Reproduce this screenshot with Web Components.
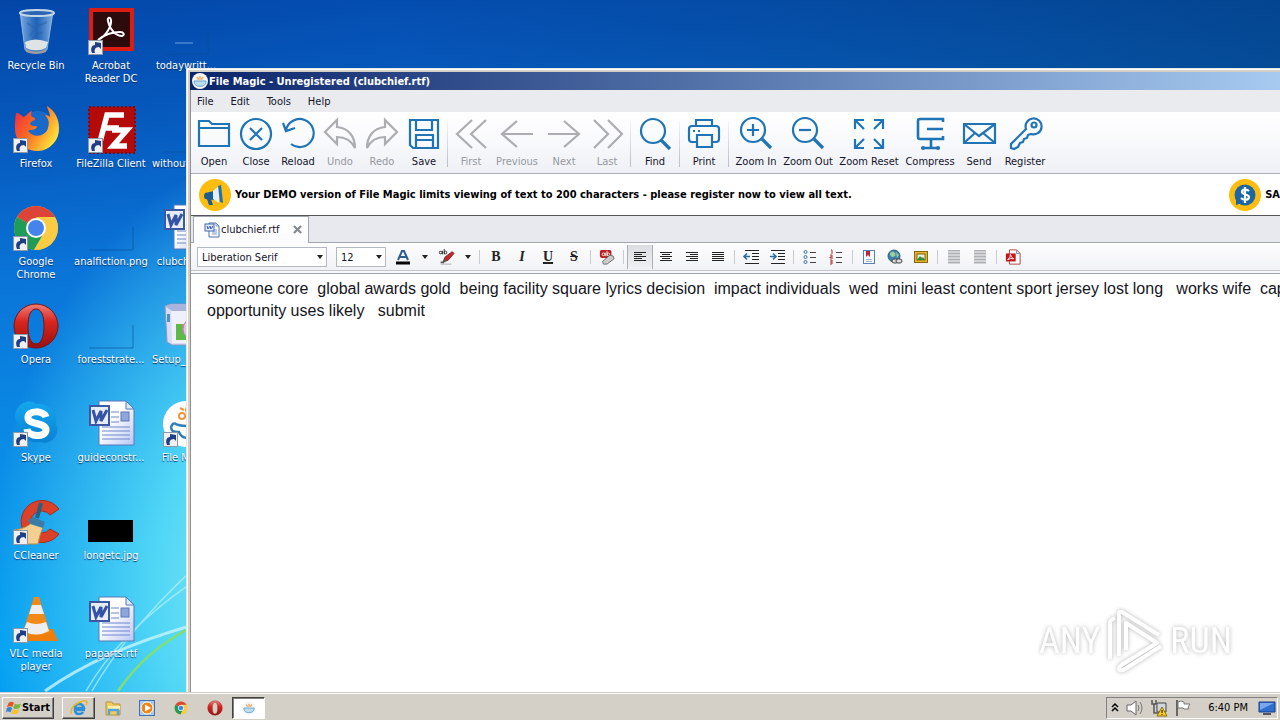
<!DOCTYPE html>
<html lang="en">
<head>
<meta charset="utf-8">
<title>Desktop - File Magic</title>
<style>
  html, body { margin: 0; height: 100%; overflow: hidden; }
  body { font: 11px/13px Tahoma, "DejaVu Sans Condensed", "Noto Sans", sans-serif; color: #101018; }
</style>
</head>
<body>
<desk-top></desk-top>

<script>
const B = '#1f74b5';
const docIcon = `<defs><linearGradient id="p" x1="0" y1="0" x2="1" y2="1"><stop offset=".4" stop-color="#fff"/><stop offset="1" stop-color="#b8c6f4"/></linearGradient></defs>
<path d="M12 1h27l8 8v36H12z" fill="url(#p)" stroke="#5878b8"/><path d="M39 1v8h8z" fill="#dfe8fb" stroke="#5878b8"/>
<path d="M24 12h8M24 17h8M24 22h8M15 27h28M15 31h28M15 35h28M15 39h28" stroke="#6f86cc" stroke-width="1.2"/><rect x="34" y="12" width="8" height="9" fill="#8fa6dc" stroke="#6077b8"/>
<rect x="3" y="6" width="19" height="19" fill="#e6ecfa" stroke="#3b57a5" stroke-width="2"/><path d="M6 10l3 11 5-10 0 10 6-11" fill="none" stroke="#3553a6" stroke-width="3"/>`;
const chromeIcon = `<circle cx="24" cy="24" r="22" fill="#f6c944"/><path d="M24 24L5 13a22 22 0 0 1 38 0z" fill="#db4437"/><path d="M5 13a22 22 0 0 0 17 33l10-17-8-5z" fill="#1f9d58"/><path d="M24 13h19a22 22 0 0 1-21 33l10-17z" fill="#fbcb43"/><circle cx="24" cy="24" r="10" fill="#fff"/><circle cx="24" cy="24" r="8" fill="#4683ea"/>`;
const operaIcon = `<defs><linearGradient id="o" x2="0" y2="1"><stop stop-color="#f08078"/><stop offset=".4" stop-color="#d8261f"/><stop offset="1" stop-color="#98100e"/></linearGradient></defs><path fill-rule="evenodd" d="M24 2a22 22 0 1 0 0 44 22 22 0 0 0 0-44zm0 5c6 0 8 8 8 17s-2 18-8 18-8-9-8-18 2-17 8-17z" fill="url(#o)" stroke="#7f100d"/>`;
const magicIcon = `<circle cx="24" cy="24" r="23" fill="#fff"/><path d="M12 23c-5 4-3 9 3 9h2c3 8 15 8 18 0M12 23c6 4 20 4 26 0 3 8-1 14-8 16" fill="none" stroke="#2f7eb8" stroke-width="2.4"/><circle cx="20" cy="16" r="3" fill="none" stroke="#ef9440" stroke-width="2"/><circle cx="27" cy="10" r="3" fill="none" stroke="#ef9440" stroke-width="2"/><path d="M18 8l4 2M30 16l4 3" stroke="#ef9440" stroke-width="2"/>`;
const cupIcon = `<circle cx="24" cy="24" r="24" fill="#f6f6f4"/><path d="M6 24h36q0 16-18 16T6 24z" fill="#bcdcf0" stroke="#6aa6cc" stroke-width="3"/><path d="M14 12l6 8M24 9v11M34 12l-6 8" stroke="#efb070" stroke-width="5"/>`;
const blank = `<path d="M2 46h44V23" fill="none" stroke="#0b4d92" stroke-opacity=".6"/>`;
/* name: [viewBox size, markup] */
const ICONS = {
  /* toolbar */
  open: [34, `<path d="M2 29V4h10l3 3h17v22zM2 11h30"/>`],
  close: [34, `<circle cx="17" cy="17" r="15"/><path d="M11 11l12 12M23 11L11 23"/>`],
  reload: [34, `<path d="M5 13A14 14 0 1 1 10 27M2 6l3 8 9-3"/>`],
  undo: [34, `<path d="M2 15L14 3v7c12 1 18 10 18 21-4-8-10-11-18-11v7z"/>`],
  redo: [34, `<path d="M32 15L20 3v7C8 11 2 20 2 31c4-8 10-11 18-11v7z"/>`],
  save: [34, `<path d="M3 3h28v28H6l-3-3zM9 3v10h16V3M9 31V18h17v13M9 23h17"/>`],
  first: [34, `<path d="M18 3L3 17l15 14M32 3L17 17l15 14"/>`],
  previous: [34, `<path d="M17 4L2 17l15 13M2 17h31"/>`],
  next: [34, `<path d="M17 4l15 13-15 13M1 17h31"/>`],
  last: [34, `<path d="M18 3l14 14-14 14M4 3l14 14L4 31"/>`],
  find: [34, `<circle cx="15" cy="14" r="12"/><path d="M23 23l9 9" stroke-width="3.2"/>`],
  print: [34, `<path d="M9 9V3h16v6M9 25H5q-3 0-3-3V12q0-3 3-3h24q3 0 3 3v10q0 3-3 3h-4M10 18h15v12H10zM6 14h2M11 14h2"/>`],
  zoomin: [34, `<circle cx="14" cy="13" r="12"/><path d="M23 22l9 9" stroke-width="3.2"/><path d="M8 13h12M14 7v12"/>`],
  zoomout: [34, `<circle cx="14" cy="13" r="12"/><path d="M23 22l9 9" stroke-width="3.2"/><path d="M8 13h12"/>`],
  zoomreset: [34, `<path d="M3 12V3h9M3 3l9 9M22 3h9v9M31 3l-9 9M3 22v9h9M3 31l9-9M31 22v9h-9M31 31l-9-9"/>`],
  compress: [34, `<path d="M30 5V2H7q-2 0-2 2v16q0 2 2 2h23v-3M14 12h16M18 22v8M9 31h17" stroke-width="2.6"/><circle cx="10" cy="31" r="1"/><circle cx="25" cy="31" r="1"/>`],
  send: [34, `<path d="M2 7h31v19H2zM2 7l15 12L33 7M2 26l11-10M33 26L21 16"/>`],
  register: [34, `<path d="M18 12A8 8 0 1 1 23 17l-3 1-1 3-3 1-1 3-3 1-2 4-4 2-3-1v-4z"/><circle cx="26" cy="8" r="2.500"/>`],
  /* notices */
  horn: [32, `<circle cx="16" cy="16" r="16" fill="#fdbd10"/><path d="M6 14l9-2v9l-9-1q-2-3 0-6z" fill="#1c5b93"/><path d="M14 12l6-5v17l-6-4z" fill="#e4f0f8"/><path d="M19 7l3-1 2 18-3-1z" fill="#1c70b4"/><path d="M8 20l2 6h4l-2-6z" fill="#1c5b93"/>`],
  dollar: [32, `<circle cx="16" cy="16" r="16" fill="#fdbd10"/><circle cx="16" cy="16" r="10.5" fill="#1c66a4"/><path d="M7 20v6l6-2z" fill="#1c66a4"/><path d="M20 12c-2-2-7-2-7 1s7 2 7 5-5 4-8 1M16 8v16" fill="none" stroke="#fff" stroke-width="2.2"/>`],
  /* formatting */
  word: [16, `<path d="M5 1h7l3 3v11H5z" fill="#fff" stroke="#4b73ad"/><path d="M12 1v3h3M8 8h5M8 10h5M8 12h5" fill="none" stroke="#7b97cb"/><rect x="1" y="2" width="9" height="7" fill="#e4ebfa" stroke="#4168ad"/><path d="M3 4l1 3 2-3 1 3 2-3" fill="none" stroke="#3558a4"/>`],
  color: [16, `<path d="M3 11L7 2h2l4 9M5 8h6" fill="none" stroke="#2b5f8f" stroke-width="2"/><path d="M1 14h14" stroke="#000" stroke-width="3"/>`],
  mark: [18, `<path d="M6 14l2-5 8-6 2 2-7 8z" fill="#c8272b" stroke="#6b2020"/><path d="M3 15h3l3-3" stroke="#555" stroke-width="2"/><path d="M3 17h12" stroke="#aaa"/><g fill="none" stroke="#222"><circle cx="3" cy="4" r="1.5"/><path d="M5 2v4M7 0v6"/><circle cx="8.500" cy="4" r="1.5"/></g>`],
  erase: [18, `<rect x="1" y="1" width="13" height="9" rx="2" fill="#b6201f"/><g fill="none" stroke="#fff"><circle cx="5" cy="6" r="1.500"/><path d="M7 4v4M9 2v6"/><circle cx="10.500" cy="6" r="1.500"/></g><path d="M4 14l8-7 4 1 1 3-8 6H5z" fill="#ccc" stroke="#666"/>`],
  left: [16, `<path d="M2 3.500h12M2 5.500h8M2 7.500h12M2 9.500h8M2 11.500h12" stroke="#222"/>`],
  center: [16, `<path d="M2 3.500h12M4 5.500h8M2 7.500h12M4 9.500h8M2 11.500h12" stroke="#222"/>`],
  right: [16, `<path d="M2 3.500h12M6 5.500h8M2 7.500h12M6 9.500h8M2 11.500h12" stroke="#222"/>`],
  justify: [16, `<path d="M2 3.500h12M2 5.500h12M2 7.500h12M2 9.500h12M2 11.500h12" stroke="#222"/>`],
  outdent: [16, `<path d="M2 1.500h14M9 4.500h7M9 7.500h7M9 10.500h7M2 14.500h14" stroke="#222"/><path d="M1 7.500h6M4 4.500l-3 3 3 3" stroke="#2b6c9c" stroke-width="1.600" fill="none"/>`],
  indent: [16, `<path d="M2 1.500h14M9 4.500h7M9 7.500h7M9 10.500h7M2 14.500h14" stroke="#222"/><path d="M1 7.500h6M4 4.500l3 3-3 3" stroke="#2b6c9c" stroke-width="1.600" fill="none"/>`],
  bullets: [16, `<g fill="none" stroke="#3571a8"><circle cx="3.500" cy="3" r="1.500"/><circle cx="3.500" cy="8" r="1.500"/><circle cx="3.500" cy="13" r="1.500"/></g><path d="M8 3.500h6M8 8.500h6M8 13.500h6" stroke="#444"/>`],
  numbers: [16, `<path d="M3 1h1v4M2 6h2v2H2v1h3M2 11h2v4H2M2 13h2" fill="none" stroke="#b0302c"/><path d="M8 3.500h6M8 8.500h6M8 13.500h6" stroke="#444"/>`],
  bookmark: [16, `<rect x="2.500" y="1.500" width="11" height="13" fill="#f8fbff" stroke="#5580b8"/><path d="M5 2h4v6L7 6 5 8z" fill="#c0252b"/><path d="M5 10.500h6M5 12.500h6" stroke="#9bb2d6"/>`],
  link: [16, `<circle cx="7" cy="7" r="6" fill="#3f80ae" stroke="#315f80"/><path d="M3 4q3-3 5 0t-2 4q-3 0-3-4M9 3l3 3-2 3z" fill="#9bcf9a"/><g fill="#ddd" stroke="#444"><rect x="5" y="10" width="6" height="4" rx="2"/><rect x="9" y="10" width="6" height="4" rx="2"/></g>`],
  image: [16, `<rect x="1.500" y="2.500" width="13" height="11" fill="#e8b62c" stroke="#8a6510"/><rect x="4" y="5" width="8" height="6" fill="#e8f6e8" stroke="#7a6010"/><path d="M4 11l3-4 2 2 1-1 2 3z" fill="#2d8f3a"/>`],
  gray: [16, `<path d="M2 1h12v14H2z" fill="#d2d3d6"/><path d="M2 1.500h12M2 4.500h12M2 7.500h12M2 10.500h12M2 13.500h12" stroke="#aeafb3"/>`],
  pdf: [18, `<path d="M5 1h8l4 4v12H5z" fill="#fff" stroke="#a33"/><path d="M13 1v4h4" fill="none" stroke="#6b86a8"/><rect x="1" y="5" width="11" height="9" fill="#c4161c"/><path d="M3 12q4-3 3-6 1 4 4 5-4-1-7 1" fill="none" stroke="#fff"/>`],
  /* desktop */
  bin: [48, `<defs><linearGradient id="g"><stop stop-color="#9fc6ea" stop-opacity=".8"/><stop offset=".5" stop-color="#3c7cc6" stop-opacity=".5"/><stop offset="1" stop-color="#a8cdec" stop-opacity=".8"/></linearGradient></defs><path d="M8 4l5 38q11 6 22 0l6-38z" fill="url(#g)" stroke="#a8cbe8" stroke-opacity=".7"/><ellipse cx="25" cy="5" rx="17" ry="3" fill="#2a66b2" stroke="#c5d7e6" stroke-width="2"/><path d="M13 34q10-5 23 0l-2 6q-10 5-20 0z" fill="#dfe3e4"/><path d="M14 41q10 5 20 0v3q-10 4-20 0z" fill="#9c9ea0"/><path d="M15 15l8 5-5 8M35 14l-9 4M20 30l11-6" stroke="#2c5fa8" stroke-width="2" fill="none" opacity=".5"/>`],
  acrobat: [48, `<rect x="2" width="45" height="43" fill="#dc1d12"/><rect x="6" y="4" width="37" height="35" fill="#2d0a0c"/><path d="M11 32c8-4 14-14 13-20-1-4-4-2-3 1 2 9 8 15 14 15 3-1 2-4-2-4-7 0-16 3-22 8z" fill="none" stroke="#fff" stroke-width="2"/>`],
  firefox: [48, `<defs><linearGradient id="f" x1="0" y1="0" x2="1" y2=".6"><stop stop-color="#f0264a"/><stop offset=".5" stop-color="#fa6b20"/><stop offset="1" stop-color="#ffe23a"/></linearGradient></defs><circle cx="26" cy="20" r="15" fill="#1869c8"/><path d="M4 7c3 0 5 2 7 4 4-1 5-5 9-6-2 4-1 6 3 7 1 3-5 3-5 6 2 3 6 1 7 3-2 4-7 2-9 4 6 8 18 5 20-3 2-7 0-9-3-13 3 0 4 1 5 2 0-5-3-8-3-11 8 5 12 13 12 22a22 22 0 0 1-44 2C3 18 3 14 4 7z" fill="url(#f)"/>`],
  filezilla: [48, `<rect x="2" y="1" width="46" height="46" fill="#b40a0a" stroke="#8c0608" stroke-width="2" stroke-dasharray="2 2"/><path d="M13 36L20 9h17M17 22h15M25 24h15L26 40h14" fill="none" stroke="#fff" stroke-width="5.500"/>`],
  chrome: [48, chromeIcon], opera: [48, operaIcon], doc: [48, docIcon], magic: [48, magicIcon], cup: [48, cupIcon],
  skype: [48, `<defs><linearGradient id="s" x2="0" y2="1"><stop stop-color="#12a8ee"/><stop offset="1" stop-color="#0a80d4"/></linearGradient></defs><path d="M14 2c4-1 8 0 10 2 14-1 22 10 20 20 5 10-5 22-16 18C14 44 4 34 5 23 0 14 6 4 14 2z" fill="url(#s)"/><path d="M34 17c-2-7-19-7-18 1 0 7 18 4 18 12 0 8-18 7-19-1" fill="none" stroke="#fff" stroke-width="7"/>`],
  ccleaner: [48, `<path d="M47 11A21 21 0 1 0 47 36l-9-5a11 11 0 1 1 0-14z" fill="#dc4128" stroke="#a82c1c"/><path d="M2 32q14-2 18-8l11 5q-4 10-5 17H12z" fill="#f4cf92" stroke="#b88a48"/><path d="M16 22l5-3 12 5-2 6-13-4z" fill="#3c7ba6"/><path d="M25 20l4-15" stroke="#286080" stroke-width="4"/>`],
  vlc: [48, `<path d="M8 33h33l5 12H2z" fill="#ee7d0c"/><path d="M22 1h5l11 35q-14 7-27 0z" fill="#f28a18"/><path d="M20 9h9l3 9H17zM15 26q9 4 19 0l3 9q-13 7-26 0z" fill="#eee"/>`],
  setup: [48, `<path d="M3 4l6-2h34v41H10l-5-3z" fill="#d9dcf2" stroke="#8793c4"/><path d="M9 7h34v34H10z" fill="#eef0fc"/><path d="M3 4l6-2h34v7H10z" fill="#a9b4dc"/><path d="M5 12h3v8H5z" fill="#4c90c4"/><path d="M14 22h12v16H14z" fill="#5fb94a"/><path d="M20 22h7v8h-7z" fill="#e8823c"/><circle cx="32" cy="27" r="11" fill="#d5c6ea" stroke="#9b8fc0"/>`],
  black: [48, `<rect x="1" y="22" width="45" height="22" fill="#000"/>`],
  blank: [48, blank],
  blank2: [48, blank + `<path d="M13 35h18" stroke="#6fa0d8"/>`],
  shortcut: [15, `<rect x=".5" y=".5" width="14" height="14" fill="#f0f0f0" stroke="#8d98a8"/><path d="M4 13c-2-5 0-8 3-8V2l6 1v6l-2-2c-4 0-5 3-4 6z" fill="#1d3f86"/>`],
  /* taskbar */
  win: [18, `<path d="M3 3q3-2 6 0L7 8Q5 6 1 8z" fill="#e4552a"/><path d="M10 4q3 2 7 0l-2 5q-4 2-7 0z" fill="#79b63a"/><path d="M1 9q3-2 6 0l-2 5q-3-2-5 0z" fill="#3d82d2"/><path d="M8 10q3 2 7 0l-2 5q-4 2-7 0z" fill="#f6c12c"/>`],
  ie: [18, `<path d="M15 11H5q0 4 4 4 3 0 4-2M5 9q0-4 4-4t5 4z" fill="none" stroke="#2d8fd8" stroke-width="2.500"/><path d="M1 15Q0 8 8 4q8-4 9-1 0 2-1 3" fill="none" stroke="#e8b424" stroke-width="1.500"/>`],
  folder: [18, `<path d="M2 3h6l1 2h7v11H2z" fill="#efcb62" stroke="#b89434"/><path d="M4 7h12v4H4z" fill="#fff2b0"/><path d="M5 16v-5h9v5" fill="none" stroke="#57a3d8" stroke-width="2.500"/>`],
  player: [18, `<rect x="1.500" y="1.500" width="15" height="15" fill="#a9ccec" stroke="#3d74b0"/><circle cx="9" cy="9" r="6" fill="#f08414" stroke="#fff"/><path d="M7 5.500v7l6-3.500z" fill="#fff"/>`],
  sound: [18, `<path d="M1 6h4l5-4v14l-5-4H1z" fill="#fff" stroke="#666"/><path d="M12 6q2 3 0 6M14 3q4 6 0 12" fill="none" stroke="#777"/>`],
  net: [18, `<path d="M7 4h9v9H7z" fill="#cfd6e2" stroke="#444"/><path d="M2 1v4h4V1M4 5v9h10" fill="none" stroke="#555" stroke-width="1.500"/><path d="M12 8l5 9H7z" fill="#f8d020" stroke="#907000"/><path d="M12 11v3M12 15v1" stroke="#000"/>`],
  flag: [18, `<path d="M3 1v16" stroke="#666" stroke-width="2"/><path d="M4 3q3-2 6 0v2h6l-2 3 1 2h-5l-1-1H4z" fill="#fff" stroke="#777"/>`],
  screen: [18, `<path d="M1 3h16v10H1z" fill="#2f6fd0" stroke="#1a3d80"/><path d="M2 4h14L2 11z" fill="#78a8ec"/><path d="M5 15h8" stroke="#556" stroke-width="2"/>`],
  chevrons: [10, `<path d="M2 4l3-3 3 3M2 8l3-3 3 3" fill="none" stroke="#000" stroke-width="1.500"/>`],
  play: [62, `<path d="M6 49V13q0-3 5-5M15 46V4q0-3 3-2l37 23M22 40V13l31 20L19 54q-6 4-3 6 2 1 5-1l36-23" fill="none" stroke="#fff" stroke-width="4" stroke-linejoin="round"/>`]
};

function define(name, css, html) {
  customElements.define(name, class extends HTMLElement {
    connectedCallback() {
      if (this.shadowRoot) return;
      const root = this.attachShadow({ mode: 'open' });
      const t = document.createElement('template');
      t.innerHTML = `<style>*{box-sizing:border-box}${css}</style>` + (typeof html === 'function' ? html(this) : html);
      root.append(t.content.cloneNode(true));
    }
  });
}

define('ui-icon', `:host{display:block;flex:none;width:var(--size,16px);height:var(--size,16px)} svg{display:block;width:100%;height:100%;overflow:visible}`,
  el => { const [n, m] = ICONS[el.getAttribute('name')];
    const line = n === 34 ? ` fill="none" stroke="currentColor" stroke-width="2.2"` : ' fill="none"';
    return `<svg viewBox="0 0 ${n} ${n}"${line} aria-hidden="true">${m}</svg>`; });

define('desk-icon', `
  :host{display:block;text-align:center;color:#fff}
  button{display:flex;flex-direction:column;align-items:center;gap:3px;width:100%;padding:0;border:0;background:none;font:inherit;color:inherit;text-shadow:0 1px 1px #00306a}
  .pic{position:relative;--size:48px}
  .pic .cut{position:absolute;left:1px;bottom:1px;--size:15px}
  .label{display:block;white-space:pre}
  :host([start]) .label{align-self:flex-start;padding-left:2px}`,
  el => `<button type="button"><span class="pic"><ui-icon name="${el.getAttribute('icon')}"></ui-icon>${el.hasAttribute('shortcut') ? '<ui-icon class="cut" name="shortcut"></ui-icon>' : ''}</span><span class="label"><slot></slot></span></button>`);

define('tool-button', `
  :host{display:block;flex:none;width:var(--w,42px)}
  button{display:flex;flex-direction:column;align-items:center;gap:4px;width:100%;padding:0;border:0;background:none;font:inherit;color:#14142a;white-space:nowrap}
  ui-icon{--size:34px;color:${B}}
  button:disabled{color:#96999f} button:disabled ui-icon{color:#acadb0}`,
  el => `<button type="button"${el.hasAttribute('disabled') ? ' disabled' : ''}><ui-icon name="${el.getAttribute('icon')}"></ui-icon><span><slot></slot></span></button>`);

define('tool-bar', `
  :host{display:flex;height:62px;padding:5px 2px 0;background:linear-gradient(#fff,#f8f9fc 50%,#eef0f5);border-bottom:1px solid #a9aeb7;overflow:hidden}
  i{flex:none;width:1px;height:46px;margin:4px 2px 0;background:linear-gradient(#f4f5f8,#b9bdc5)}
  .w44{--w:44px}.w48{--w:48px}.w50{--w:50px}.w54{--w:54px}.w68{--w:68px}`, `
  <tool-button icon="open">Open</tool-button><tool-button icon="close">Close</tool-button><tool-button icon="reload">Reload</tool-button>
  <tool-button icon="undo" disabled>Undo</tool-button><tool-button icon="redo" disabled>Redo</tool-button><tool-button icon="save">Save</tool-button><i></i>
  <tool-button icon="first" disabled>First</tool-button><tool-button class="w50" icon="previous" disabled>Previous</tool-button><tool-button class="w44" icon="next" disabled>Next</tool-button><tool-button icon="last" disabled>Last</tool-button><i></i>
  <tool-button class="w44" icon="find">Find</tool-button><i></i><tool-button class="w44" icon="print">Print</tool-button><i></i>
  <tool-button class="w50" icon="zoomin">Zoom In</tool-button><tool-button class="w54" icon="zoomout">Zoom Out</tool-button><tool-button class="w68" icon="zoomreset">Zoom Reset</tool-button>
  <tool-button class="w54" icon="compress">Compress</tool-button><tool-button class="w44" icon="send">Send</tool-button><tool-button class="w48" icon="register">Register</tool-button>`);

define('menu-bar', `
  :host{display:flex;align-items:center;gap:17px;height:22px;padding:0 6px;background:#e9ebee}
  button{padding:0;border:0;background:none;font:inherit;color:#14142a}`,
  `<button type="button">File</button><button type="button">Edit</button><button type="button">Tools</button><button type="button">Help</button>`);

define('notice-bar', `
  :host{display:flex;justify-content:space-between;align-items:center;height:42px;padding-left:8px;background:#fff;border-bottom:1px solid #55565a;font-weight:bold;color:#000;white-space:nowrap;overflow:hidden}
  p{display:flex;align-items:center;gap:4px;margin:0} ui-icon{--size:32px}`, `
  <p><ui-icon name="horn"></ui-icon><span>Your DEMO version of File Magic limits viewing of text to 200 characters - please register now to view all text.</span></p>
  <p><ui-icon name="dollar"></ui-icon><span>SA</span></p>`);

define('tab-strip', `
  :host{display:flex;height:27px;padding-left:2px;background:#e8e9ee;border-bottom:1px solid #a0a5ae}
  .tab{display:flex;align-items:center;gap:13px;height:27px;padding:0 6px 1px 10px;background:linear-gradient(#fff,#fbfbfd);border:solid #a0a5ae;border-width:1px 1px 0}
  button{display:flex;align-items:center;gap:1px;padding:0;border:0;background:none;font:inherit;color:#14142a}`, `
  <div class="tab"><button type="button" role="tab" aria-selected="true"><ui-icon name="word"></ui-icon>clubchief.rtf</button>
  <button type="button" aria-label="Close tab"><svg width="9" height="9" viewBox="0 0 10 10" aria-hidden="true"><path d="M1 1l8 8M9 1L1 9" stroke="#85888e" stroke-width="2.4"/></svg></button></div>`);

define('drop-down', `
  :host{display:block;position:relative;width:var(--w,130px);height:20px}
  select{display:block;appearance:none;width:100%;height:100%;padding:0 16px 0 4px;border:1px solid #b4b8c0;border-radius:0;background:#fff;font:inherit;color:#14142a}
  label{display:block;height:100%}
  label::after{content:"";position:absolute;right:4px;top:8px;border:3px solid transparent;border-top:4px solid #222;border-bottom:0;pointer-events:none}`,
  el => `<label><select aria-label="${el.getAttribute('name')}"><option>${el.textContent}</option></select></label>`);

define('format-button', `
  :host{display:block;width:26px;height:24px}
  button{display:grid;place-items:center;width:100%;height:100%;padding:0;border:0;background:none;color:#222;font:bold 14px/16px "Liberation Serif",serif}
  :host([pressed]) button{background:linear-gradient(#dadde2,#f0f1f3);box-shadow:inset 1px 0 #aaaeb5,inset -1px 0 #aaaeb5}
  :host([arrow]){width:17px} .arrow{border:3px solid transparent;border-top:4px solid #222;border-bottom:0}`,
  el => `<button type="button" aria-label="${el.title}">${el.getAttribute('icon') ? `<ui-icon name="${el.getAttribute('icon')}"></ui-icon>` : el.hasAttribute('arrow') ? '<span class="arrow"></span>' : '<span><slot></slot></span>'}</button>`);

define('format-bar', `
  :host{display:flex;align-items:center;height:31px;padding:0 6px 2px;background:linear-gradient(#fdfdfe,#f0f1f5);border-bottom:1px solid #9ea3ac;box-shadow:inset 0 -2px #f8f9fb,inset 0 -3px #c2c5cb}
  :host>*{flex:none} .size{--w:50px;margin:0 4px 0 9px}
  hr{width:1px;height:14px;margin:0 3px;border:0;background:#c9cbd1}
  i{font-style:italic}u{text-decoration-thickness:2px}`, `
  <drop-down name="Font">Liberation Serif</drop-down><drop-down class="size" name="Size">12</drop-down>
  <format-button icon="color" title="Font color"></format-button><format-button arrow title="More colors"></format-button>
  <format-button icon="mark" title="Highlight"></format-button><format-button arrow title="More highlights"></format-button><hr>
  <format-button title="Bold">B</format-button><format-button title="Italic"><i>I</i></format-button><format-button title="Underline"><u>U</u></format-button><format-button title="Strike"><s>S</s></format-button><hr>
  <format-button icon="erase" title="Clear formatting"></format-button><hr>
  <format-button pressed icon="left" title="Align left"></format-button><format-button icon="center" title="Center"></format-button><format-button icon="right" title="Align right"></format-button><format-button icon="justify" title="Justify"></format-button><hr>
  <format-button icon="outdent" title="Outdent"></format-button><format-button icon="indent" title="Indent"></format-button><hr>
  <format-button icon="bullets" title="Bullets"></format-button><format-button icon="numbers" title="Numbering"></format-button><hr>
  <format-button icon="bookmark" title="Bookmark"></format-button><format-button icon="link" title="Link"></format-button><format-button icon="image" title="Image"></format-button><hr>
  <format-button icon="gray" title="Header"></format-button><format-button icon="gray" title="Footer"></format-button><hr>
  <format-button icon="pdf" title="Export PDF"></format-button>`);

define('app-window', `
  :host{display:flex;flex-direction:column;background:#d4d0c8;box-shadow:inset 1px 1px #e8e6e0,inset 2px 2px #fff;padding:4px 0 0 4px;overflow:hidden}
  header{display:flex;align-items:center;gap:1px;height:18px;padding-left:2px;background:linear-gradient(90deg,#0a246a,#a6caf0);color:#fff;font-weight:bold}
  main{display:flex;flex-direction:column;flex:1;min-height:0;border-left:1px solid #8e9198;background:#fff}
  textarea{flex:1;display:block;width:100%;margin:0;padding:4px 0 0 16px;border:0;outline:0;resize:none;overflow:hidden;background:#fff;white-space:pre;font:16px/22px "Liberation Sans",Arial,sans-serif;color:#15151d}`, `
  <header><ui-icon name="cup"></ui-icon><span>File Magic - Unregistered (clubchief.rtf)</span></header>
  <main><menu-bar></menu-bar><tool-bar></tool-bar><notice-bar></notice-bar><tab-strip></tab-strip><format-bar></format-bar>
  <textarea aria-label="Document" spellcheck="false">someone core  global awards gold  being facility square lyrics decision  impact individuals  wed  mini least content sport jersey lost long   works wife  cap
opportunity uses likely   submit</textarea></main>`);

define('any-run', `
  :host{display:flex;align-items:center;gap:4px;color:#fff;font:36px/40px "Liberation Sans Narrow","Roboto Condensed","Liberation Sans",sans-serif;filter:drop-shadow(0 0 2px #b4b4b4)}
  ui-icon{--size:62px}`, `<span>ANY</span><ui-icon name="play"></ui-icon><span>RUN</span>`);

define('task-bar', `
  :host{display:flex;align-items:center;height:28px;padding:2px 2px 0;background:#d4d0c8;border-top:1px solid #d4d0c8;box-shadow:inset 0 1px #fff;color:#000}
  button{display:grid;place-items:center;width:33px;height:22px;margin-right:1px;padding:0;border:0;background:none;font:inherit;--size:18px}
  .up{border:1px solid;border-color:#fff #404040 #404040 #fff;box-shadow:inset -1px -1px #808080}
  .start{display:flex;align-items:center;justify-content:center;width:52px;margin:0 8px 0 0;font:bold 11px/14px Tahoma,"DejaVu Sans Condensed",sans-serif;--size:16px}
  .down{background:#fff;border:1px solid;border-color:#404040 #fff #fff #404040;box-shadow:inset 1px 1px #808080;--size:14px}
  .tray{display:flex;align-items:center;gap:6px;height:22px;margin-left:auto;padding:0 1px 0 3px;border:1px solid;border-color:#808080 #fff #fff #808080;--size:18px}
  .tray .small{--size:10px} time{margin:0 4px 0 10px;white-space:nowrap}
  .s14{--size:14px}.s16{--size:16px}`, `
  <button class="up start" type="button"><ui-icon name="win"></ui-icon>Start</button>
  <button class="up" type="button" aria-label="Internet Explorer"><ui-icon name="ie"></ui-icon></button>
  <button type="button" aria-label="Explorer"><ui-icon name="folder"></ui-icon></button>
  <button type="button" aria-label="Media Player"><ui-icon name="player"></ui-icon></button>
  <button class="s14" type="button" aria-label="Chrome"><ui-icon name="chrome"></ui-icon></button>
  <button class="s16" type="button" aria-label="Opera"><ui-icon name="opera"></ui-icon></button>
  <button class="down" type="button" aria-label="File Magic"><ui-icon name="cup"></ui-icon></button>
  <div class="tray"><ui-icon class="small" name="chevrons"></ui-icon><ui-icon name="sound"></ui-icon><ui-icon name="net"></ui-icon><ui-icon name="flag"></ui-icon><time>6:40 PM</time><ui-icon name="screen"></ui-icon></div>`);

define('desk-top', `
  :host{display:flex;flex-direction:column;height:100vh}
  .area{position:relative;flex:1;min-height:0;overflow:hidden;
    background:radial-gradient(ellipse 300px 440px at 290px 590px,#9cf0f6 0,#50d6f6 45%,rgba(20,180,245,0) 100%),linear-gradient(90deg,transparent 30%,rgba(0,40,90,.5)) 0 0/100% 70px no-repeat,linear-gradient(172deg,#0346a8 0,#0658bc 15%,#0a74d8 32%,#0a8ce6 52%,#04a0f2 75%,#0596f0 100%)}
  .rays{position:absolute;left:0;bottom:0;width:190px;height:170px}
  .icons{display:grid;grid-template-columns:repeat(3,72px);grid-auto-flow:column;grid-template-rows:repeat(7,98px);column-gap:3px;padding-top:8px}
  desk-icon{position:relative}
  app-window{position:absolute;left:186px;top:68px;right:0;bottom:0}
  any-run{position:absolute;right:48px;bottom:20px;pointer-events:none}`, `
  <div class="area">
    <svg class="rays" viewBox="0 0 190 170" fill="none" aria-hidden="true"><path d="M45 169Q100 130 190 104" stroke="#c8f4fc" stroke-width="3" opacity=".8"/><path d="M86 169Q120 110 190 62M92 169Q126 110 190 50" stroke="#b8f2fb" stroke-width="1.500" opacity=".7"/><path d="M118 169Q146 128 190 106" stroke="#7ee070" stroke-width="2.500"/></svg>
    <div class="icons">
      <desk-icon icon="bin">Recycle Bin</desk-icon>
      <desk-icon icon="firefox" shortcut>Firefox</desk-icon>
      <desk-icon icon="chrome" shortcut>Google
Chrome</desk-icon>
      <desk-icon icon="opera" shortcut>Opera</desk-icon>
      <desk-icon icon="skype" shortcut>Skype</desk-icon>
      <desk-icon icon="ccleaner" shortcut>CCleaner</desk-icon>
      <desk-icon icon="vlc" shortcut>VLC media
player</desk-icon>
      <desk-icon icon="acrobat" shortcut>Acrobat
Reader DC</desk-icon>
      <desk-icon icon="filezilla" shortcut>FileZilla Client</desk-icon>
      <desk-icon icon="blank">analfiction.png</desk-icon>
      <desk-icon icon="blank">foreststrate...</desk-icon>
      <desk-icon icon="doc">guideconstr...</desk-icon>
      <desk-icon icon="black">longetc.jpg</desk-icon>
      <desk-icon icon="doc">paparts.rtf</desk-icon>
      <desk-icon icon="blank2">todaywritt...</desk-icon>
      <desk-icon icon="blank" start>without</desk-icon>
      <desk-icon icon="doc">clubchief.rtf</desk-icon>
      <desk-icon icon="setup" start>Setup_</desk-icon>
      <desk-icon icon="magic" shortcut>File Magic</desk-icon>
    </div>
    <app-window></app-window>
    <any-run></any-run>
  </div>
  <task-bar></task-bar>`);
</script>
</body>
</html>
